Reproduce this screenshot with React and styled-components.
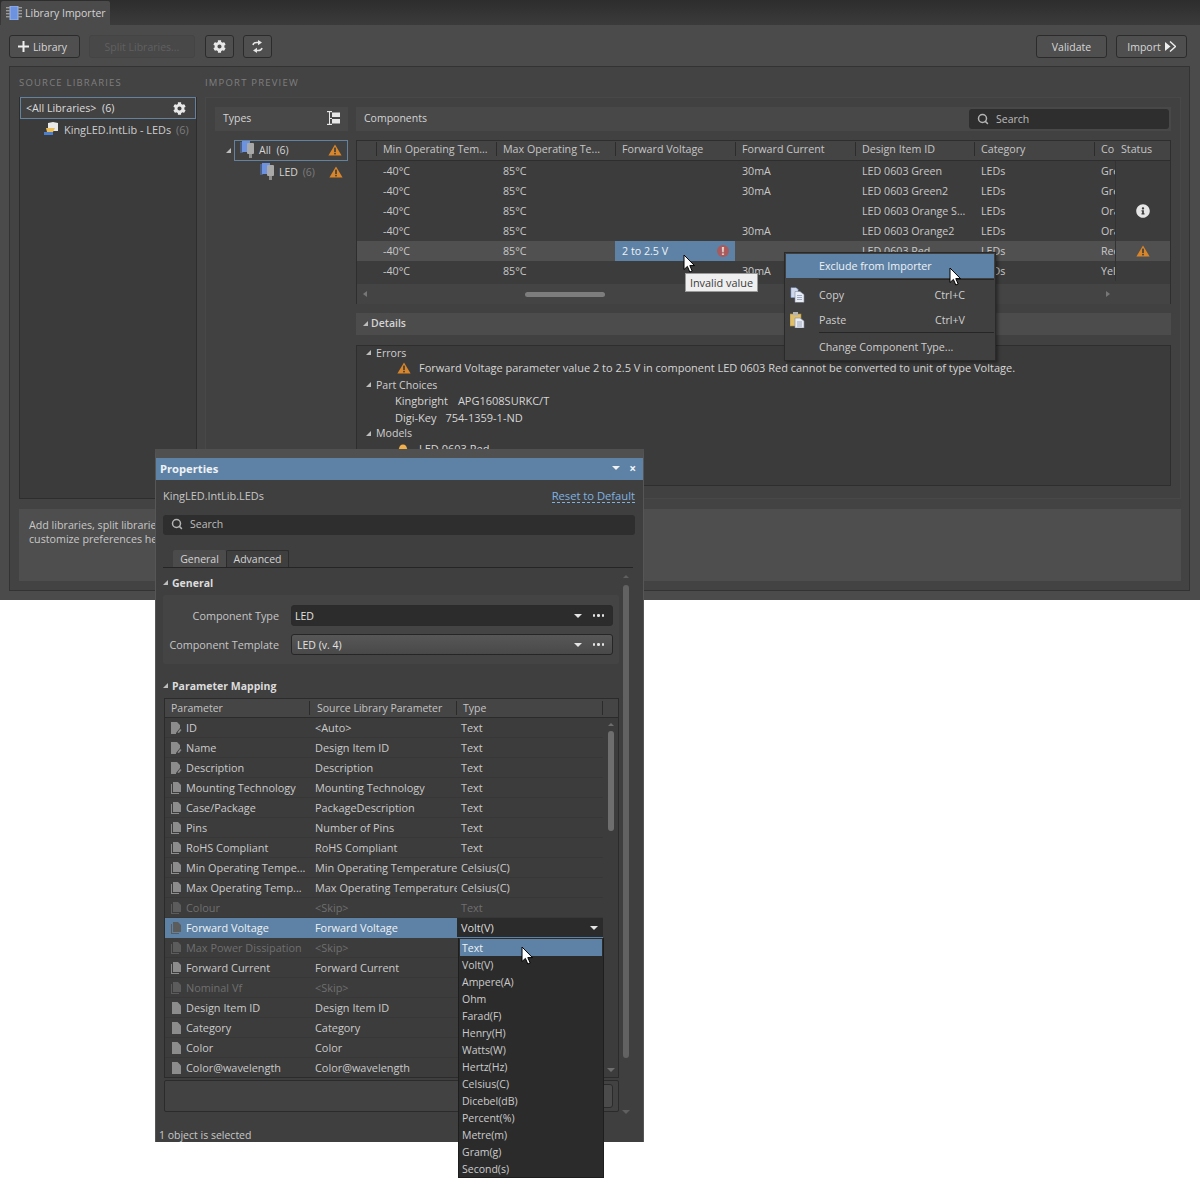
import React from 'react';
import styled, { createGlobalStyle } from 'styled-components';
import { FaCog, FaInfoCircle } from 'react-icons/fa';
import { LuSearch } from 'react-icons/lu';

const Global = createGlobalStyle`
    html, body {
        margin: 0;
        background: #fff;
    }
    * {
        box-sizing: border-box;
    }
    body {
        font-family: "Open Sans", "Liberation Sans", sans-serif;
        font-size: 10.5px;
        color: #cfcfcf;
    }
`;

const Page = styled.div`
    position: relative;
    width: 1200px;
    height: 1178px;
    overflow: hidden;
    background: #fff;
`;

const Window = styled.div`
    height: 600px;
    background: #4b4b4b;
    display: flex;
    flex-direction: column;
`;

const TabBar = styled.div`
    height: 25px;
    padding: 1px 0 0 1px;
    background: linear-gradient(#2d2d2d, #3b3b3b);
    display: flex;
`;

const Tab = styled.div`
    width: 109px;
    height: 24px;
    padding-left: 5px;
    display: flex;
    align-items: center;
    gap: 3px;
    background: #4b4b4b;
    border-radius: 2px 2px 0 0;
    color: #d4d4d4;
`;

const Toolbar = styled.div`
    height: 41px;
    padding: 10px 13px 0 9px;
    display: flex;
    gap: 9px;
    flex-shrink: 0;
`;

const Button = styled.div`
    width: ${(p) => p.$w}px;
    height: 23px;
    padding-right: ${(p) => p.$pr || 0}px;
    display: flex;
    align-items: center;
    justify-content: center;
    gap: 4px;
    border: 1px solid ${(p) => (p.$off ? '#444' : '#2b2b2b')};
    border-radius: 3px;
    background: ${(p) => (p.$off ? '#484848' : '#4f4f4f')};
    color: ${(p) => (p.$off ? '#606060' : '#d6d6d6')};
    margin-left: ${(p) => (p.$push ? 'auto' : `${p.$ml || 0}px`)};
`;

const Frame = styled.div`
    height: 525px;
    margin: 0 10px 0 9px;
    padding: 0 8px 0 9px;
    border: 1px solid #333;
    background: #434343;
`;

const Columns = styled.div`
    height: 432px;
    display: grid;
    grid-template-columns: 178px 976px;
    column-gap: 8px;
`;

const Side = styled.div`
    display: flex;
    flex-direction: column;
`;

const SideLabel = styled.div`
    height: 30px;
    padding-top: 9px;
    font-size: 9.5px;
    letter-spacing: 1.2px;
    color: #7f7f7f;
    line-height: 13px;
`;

const SourceList = styled.div`
    height: 402px;
    background: #3b3b3b;
    border: 1px solid #2d2d2d;
    border-top: 0;
`;

const SourceAll = styled.div`
    height: 22px;
    padding: 0 9px 0 5px;
    display: flex;
    align-items: center;
    justify-content: space-between;
    border: 1px solid #64829e;
    background: #424242;
    color: #dcdcdc;
    font-size: 10.7px;
`;

const SourceChild = styled.div`
    height: 22px;
    padding: 0 0 2px 24px;
    display: flex;
    align-items: center;
    gap: 5px;
    color: #cdcdcd;
    font-size: 10.9px;
`;

const Count = styled.span`
    color: #7c7c7c;
    margin-left: ${(p) => p.$gap || 0}px;
`;

const Preview = styled.div`
    height: 402px;
    padding: 9px 8px 0 9px;
    border: 1px solid #484848;
    background: #414141;
    display: grid;
    grid-template-columns: 133px 815px;
    column-gap: 8px;
`;

const HeadBar = styled.div`
    height: 24px;
    padding: 0 8px 2px;
    display: flex;
    align-items: center;
    justify-content: space-between;
    background: #484848;
    color: #d4d4d4;
`;

const SearchBox = styled.div`
    width: ${(p) => (p.$wide ? '100%' : '200px')};
    height: 20px;
    margin-right: ${(p) => (p.$wide ? 0 : -6)}px;
    margin-bottom: ${(p) => (p.$wide ? 0 : -2)}px;
    padding: 0 0 ${(p) => (p.$wide ? 2 : 1)}px 8px;
    display: flex;
    align-items: center;
    gap: 7px;
    background: #2e2e2e;
    border-radius: 3px;
    color: #bdbdbd;
`;

const Tree = styled.div`
    margin-top: 9px;
    padding-left: 11px;
`;

const TreeRow = styled.div`
    height: ${(p) => (p.$on ? 21 : 23)}px;
    margin-left: ${(p) => (p.$on ? 8 : 34)}px;
    padding: 0 5px ${(p) => (p.$on ? 2 : 2)}px ${(p) => (p.$on ? 5 : 0)}px;
    display: flex;
    align-items: center;
    gap: 4px;
    border: ${(p) => (p.$on ? '1px solid #64829e' : '0')};
    position: relative;
    color: #d4d4d4;
`;

const TreeEnd = styled.span`
    margin-left: auto;
    display: flex;
`;

const Caret = styled.span`
    display: inline-block;
    width: 0;
    height: 0;
    border-left: 5px solid transparent;
    border-bottom: 5px solid #bdbdbd;
    flex-shrink: 0;
`;

const TreeCaret = styled(Caret)`
    position: absolute;
    left: -9px;
    top: 7px;
`;

const Right = styled.div`
    display: flex;
    flex-direction: column;
`;

const Table = styled.div`
    height: 164px;
    margin-top: 9px;
    border: 1px solid #2e2e2e;
    background: #3c3c3c;
    font-size: 10.7px;
`;

const cols = '19px 120px 119px 120px 120px 119px 120px 21px 1fr';

const HeaderRow = styled.div`
    height: 20px;
    padding-bottom: 3px;
    display: grid;
    grid-template-columns: ${cols};
    align-items: center;
    background: #444;
    border-bottom: 1px solid #2e2e2e;
    color: #c6c6c6;
`;

const HeaderCell = styled.div`
    height: 14px;
    line-height: 14px;
    padding-left: 6px;
    border-left: ${(p) => (p.$plain ? '0' : '1px solid #2c2c2c')};
    white-space: nowrap;
    overflow: hidden;
`;

const DataRow = styled.div`
    height: 20px;
    display: grid;
    grid-template-columns: ${cols};
    align-items: center;
    background: ${(p) => (p.$on ? '#505050' : 'transparent')};
    color: #c8c8c8;
`;

const Cell = styled.div`
    height: 100%;
    padding-left: 7px;
    display: flex;
    align-items: center;
    white-space: nowrap;
    overflow: hidden;
    background: ${(p) => (p.$bad ? '#5e82a5' : 'transparent')};
    color: ${(p) => (p.$bad ? '#eef2f6' : 'inherit')};
    justify-content: ${(p) => (p.$bad ? 'space-between' : 'flex-start')};
`;

const StatusCell = styled.div`
    height: 100%;
    display: flex;
    align-items: center;
    justify-content: center;
    border-left: 1px solid #333;
`;

const ErrorDot = styled.span`
    width: 12px;
    height: 12px;
    margin-right: 6px;
    border-radius: 50%;
    background: #a85a5c;
    color: #f2e6e6;
    font-size: 10px;
    font-weight: 700;
    line-height: 12px;
    text-align: center;
`;

const TableScroll = styled.div`
    height: 20px;
    margin-top: 3px;
    padding: 0 6px;
    display: flex;
    align-items: center;
    position: relative;
    background: #444;
`;

const ScrollThumb = styled.div`
    width: 80px;
    height: 5px;
    margin-left: 158px;
    border-radius: 3px;
    background: #7d7d7d;
`;

const ArrowLeft = styled.span`
    width: 0;
    height: 0;
    border: 3px solid transparent;
    border-right: 4px solid #777;
    border-left: 0;
`;

const ArrowRight = styled.span`
    width: 0;
    height: 0;
    margin-left: 501px;
    border: 3px solid transparent;
    border-left: 4px solid #777;
    border-right: 0;
`;

const DetailsBar = styled(HeadBar)`
    height: 22px;
    margin-top: 9px;
    padding-left: 7px;
    justify-content: flex-start;
    gap: 3px;
    background: #4c4c4c;
    font-weight: 600;
`;

const DetailsBox = styled.div`
    height: 141px;
    margin-top: 10px;
    padding: 0 9px;
    border: 1px solid #2e2e2e;
    background: #3b3b3b;
    overflow: hidden;
`;

const DetailHead = styled.div`
    height: ${(p) => p.$h}px;
    display: flex;
    align-items: center;
    gap: 5px;
    color: #cfcfcf;
    font-size: 10.6px;
`;

const DetailLine = styled.div`
    height: ${(p) => p.$h}px;
    padding-left: ${(p) => p.$in}px;
    display: flex;
    align-items: center;
    gap: ${(p) => p.$gap || 0}px;
    white-space: nowrap;
    color: #d6d6d6;
    font-size: 11px;
`;

const Description = styled.div`
    height: 72px;
    margin-top: 10px;
    padding: 10px 10px;
    background: #4e4e4e;
    line-height: 13.5px;
    color: #c8c8c8;
    font-size: 10.7px;
`;

/* floating Properties window */
const Panel = styled.div`
    position: absolute;
    left: 155px;
    top: 449px;
    width: 489px;
    height: 693px;
    background: #3f3f3f;
    border: 1px solid #565656;
    border-top: 9px solid #505050;
    border-bottom: 0;
    display: flex;
    flex-direction: column;
`;

const PanelTitle = styled.div`
    height: 22px;
    padding: 0 5px 2px 4px;
    display: flex;
    align-items: center;
    justify-content: space-between;
    flex-shrink: 0;
    background: #5e82a5;
    color: #eef2f6;
    font-size: 11.2px;
    font-weight: 700;
`;

const TitleTools = styled.div`
    display: flex;
    align-items: center;
    gap: 9px;
    padding-right: 2px;
    font-size: 12px;
`;

const PanelHead = styled.div`
    height: 35px;
    padding: 0 8px 4px 7px;
    display: flex;
    align-items: center;
    justify-content: space-between;
    flex-shrink: 0;
    font-size: 10.9px;
    color: #c6c6c6;
`;

const ResetLink = styled.span`
    color: #7fb2e0;
    border-bottom: 1px dashed #7fb2e0;
    line-height: 13px;
    font-size: 11.2px;
`;

const PanelSearch = styled.div`
    padding: 0 8px 0 7px;
    flex-shrink: 0;
`;

const TabRow = styled.div`
    height: 18px;
    margin: 15px 10px 0 7px;
    padding-left: 10px;
    display: flex;
    flex-shrink: 0;
    border-bottom: 1px solid #252525;
`;

const PanelTab = styled.div`
    height: 17px;
    padding: 0 7px;
    width: ${(p) => p.$w}px;
    display: flex;
    align-items: center;
    justify-content: center;
    background: ${(p) => (p.$on ? '#4b4b4b' : '#3f3f3f')};
    border: 1px solid ${(p) => (p.$on ? '#4b4b4b' : '#2c2c2c')};
    border-bottom: 0;
    border-radius: 2px 2px 0 0;
    color: #d4d4d4;
`;

const PanelBody = styled.div`
    flex: 1;
    padding-left: 7px;
    display: flex;
`;

const PanelMain = styled.div`
    width: 456px;
`;

const SectionHead = styled.div`
    height: ${(p) => p.$h}px;
    padding-top: ${(p) => p.$pt}px;
    display: flex;
    align-items: center;
    gap: 4px;
    color: #dcdcdc;
    font-weight: 700;
`;

const GroupBox = styled.div`
    height: 69px;
    padding: 10px 6px 0 0;
    background: #444;
    border-radius: 2px;
    display: flex;
    flex-direction: column;
    gap: 8px;
`;

const FieldRow = styled.div`
    height: 21px;
    display: flex;
    align-items: center;
    gap: 12px;
`;

const FieldLabel = styled.div`
    width: 116px;
    text-align: right;
    color: #c6c6c6;
    font-size: 10.8px;
`;

const FieldSelect = styled.div`
    flex: 1;
    height: 100%;
    padding: 0 8px 0 ${(p) => (p.$raised ? 5 : 3)}px;
    display: flex;
    align-items: center;
    justify-content: space-between;
    border-radius: 3px;
    border: 1px solid ${(p) => (p.$raised ? '#262626' : '#2b2b2b')};
    background: ${(p) => (p.$raised ? 'linear-gradient(#575757, #494949)' : '#2c2c2c')};
    color: #e2e2e2;
`;

const FieldTools = styled.div`
    display: flex;
    align-items: center;
    gap: 11px;
`;

const DownTri = styled.span`
    width: 0;
    height: 0;
    border-left: 4px solid transparent;
    border-right: 4px solid transparent;
    border-top: 4px solid ${(p) => p.$c || '#e4e4e4'};
`;

const Dots = styled.span`
    display: flex;
    gap: 2px;
    i {
        width: 2.5px;
        height: 2.5px;
        border-radius: 50%;
        background: #e4e4e4;
    }
`;

const MapTable = styled.div`
    height: 380px;
    margin-left: 1px;
    border: 1px solid #2b2b2b;
    background: #3c3c3c;
    font-size: 10.9px;
`;

const MapHeader = styled.div`
    height: 19px;
    padding-right: 15px;
    display: grid;
    grid-template-columns: 145px 147px 146px;
    align-items: center;
    background: #454545;
    border-bottom: 1px solid #2b2b2b;
    color: #c4c4c4;
    font-size: 10.5px;
`;

const MapHeadCell = styled.div`
    padding-left: ${(p) => p.$pad}px;
    height: 14px;
    line-height: 14px;
    border-right: 1px solid #2b2b2b;
`;

const MapBody = styled.div`
    height: 359px;
    display: flex;
    overflow: hidden;
`;

const MapRows = styled.div`
    width: 438px;
    flex-shrink: 0;
`;

const MapRow = styled.div`
    height: 20px;
    display: grid;
    grid-template-columns: 145px 147px 146px;
    align-items: center;
    background: ${(p) => (p.$on ? '#5e82a5' : 'transparent')};
    border-bottom: 1px solid ${(p) => (p.$on ? '#5e82a5' : '#373737')};
    color: ${(p) => (p.$on ? '#eef2f6' : p.$skip ? '#6f6f6f' : '#cbcbcb')};
`;

const MapName = styled.div`
    padding-left: 6px;
    display: flex;
    align-items: center;
    gap: 4px;
    white-space: nowrap;
    overflow: hidden;
`;

const MapCell = styled.div`
    padding-left: ${(p) => p.$pad}px;
    white-space: nowrap;
    overflow: hidden;
`;

const TypeSelect = styled.div`
    height: 19px;
    padding: 0 5px 0 4px;
    display: flex;
    align-items: center;
    justify-content: space-between;
    background: #2b2b2b;
    color: #dedede;
`;

const MapScroll = styled.div`
    flex: 1;
    padding-top: 5px;
    display: flex;
    flex-direction: column;
    align-items: center;
`;

const UpTri = styled.span`
    width: 0;
    height: 0;
    border-left: 3px solid transparent;
    border-right: 3px solid transparent;
    border-bottom: 3px solid ${(p) => p.$c || '#6e6e6e'};
`;

const MapThumb = styled.div`
    width: 6px;
    height: 100px;
    margin-top: 5px;
    border-radius: 3px;
    background: #6e6e6e;
`;

const MapDown = styled.div`
    margin-top: auto;
    margin-bottom: 5px;
    display: flex;
`;

const Under = styled.div`
    height: 32px;
    margin: 2px 0 0 1px;
    padding: 3px 5px 3px 0;
    display: flex;
    justify-content: flex-end;
    border: 1px solid #2b2b2b;
    background: #424242;
    border-radius: 2px;
`;

const UnderButton = styled.div`
    width: 60px;
    border: 1px solid #2b2b2b;
    border-radius: 3px;
    background: #4b4b4b;
`;

const BodyScroll = styled.div`
    width: 14px;
    height: 546px;
    padding-top: 7px;
    display: flex;
    flex-direction: column;
    align-items: center;
`;

const BodyThumb = styled.div`
    width: 6px;
    height: 473px;
    margin-top: 7px;
    border-radius: 3px;
    background: #626262;
`;

const BodyDown = styled.div`
    margin-top: auto;
    display: flex;
`;

const StatusBar = styled.div`
    height: 20px;
    padding: 6px 0 0 3px;
    flex-shrink: 0;
    color: #c8c8c8;
`;

/* overlays */
const Menu = styled.div`
    position: absolute;
    left: 784px;
    top: 252px;
    width: 212px;
    height: 109px;
    padding: 1px;
    background: #404040;
    border: 1px solid #2a2a2a;
    box-shadow: 2px 2px 3px rgba(0, 0, 0, 0.4);
    font-size: 10.7px;
`;

const MenuItem = styled.div`
    height: ${(p) => p.$h}px;
    padding: 0 29px 0 33px;
    display: flex;
    align-items: center;
    justify-content: space-between;
    position: relative;
    background: ${(p) => (p.$on ? '#5e82a5' : 'transparent')};
    color: ${(p) => (p.$on ? '#eef2f6' : '#cfcfcf')};
`;

const MenuIcon = styled.span`
    position: absolute;
    left: 4px;
    top: 50%;
    transform: translateY(-50%);
    display: flex;
`;

const MenuLine = styled.div`
    height: 1px;
    margin: ${(p) => p.$mt}px 0 0 33px;
    background: #262626;
`;

const Tooltip = styled.div`
    position: absolute;
    left: 685px;
    top: 273px;
    width: 73px;
    height: 19px;
    padding-bottom: 1px;
    display: flex;
    align-items: center;
    justify-content: center;
    background: #efefef;
    border: 1px solid #9a9a9a;
    color: #3a3a3a;
    font-size: 10.9px;
`;

const Cursor = styled.svg`
    position: absolute;
    left: ${(p) => p.$x}px;
    top: ${(p) => p.$y}px;
`;

const TypeMenu = styled.div`
    position: absolute;
    left: 458px;
    top: 938px;
    width: 146px;
    height: 240px;
    padding: 1px;
    background: #2b2b2b;
    border: 1px solid #1e1e1e;
    border-top: 0;
`;

const TypeItem = styled.div`
    height: 17px;
    padding-left: 2px;
    display: flex;
    align-items: center;
    background: ${(p) => (p.$on ? '#5e82a5' : 'transparent')};
    color: ${(p) => (p.$on ? '#eef2f6' : '#cbcbcb')};
`;

const WarnIcon = () => (
    <svg width="14" height="12" viewBox="0 0 14 12">
        <path d="M7 0.5 L13.6 11.5 H0.4 Z" fill="#d9862a" />
        <rect x="6.2" y="3.6" width="1.6" height="4.4" fill="#3a3a3a" />
        <rect x="6.2" y="8.8" width="1.6" height="1.6" fill="#3a3a3a" />
    </svg>
);

const LedIcon = () => (
    <svg width="15" height="17" viewBox="0 0 15 17">
        <rect x="0" y="1" width="3" height="11" fill="#4b5f86" />
        <rect x="2" y="0" width="8" height="11" fill="#6d93e0" />
        <rect x="7" y="2" width="7" height="11" rx="1" fill="#a9a9a9" />
        <rect x="9" y="13" width="3" height="4" fill="#8c8c8c" />
    </svg>
);

const ChipIcon = () => (
    <svg width="16" height="14" viewBox="0 0 16 14">
        <rect x="4" y="0" width="8" height="14" fill="#6d93e0" stroke="#9db8ee" />
        {[1, 4, 7, 10].map((y) => (
            <g key={y}>
                <rect x="0" y={y} width="4" height="1.4" fill="#9a9a9a" />
                <rect x="12" y={y} width="4" height="1.4" fill="#9a9a9a" />
            </g>
        ))}
    </svg>
);

const LibIcon = () => (
    <svg width="15" height="14" viewBox="0 0 15 14">
        <path d="M4 1 L9 0 L14 1 V9 H4 Z" fill="#e9e9e9" />
        <path d="M2 6 H11 L9 10 H3 Z" fill="#e8bd5a" />
        <rect x="0" y="10" width="9" height="3" fill="#4d7fcf" />
    </svg>
);

const ModelIcon = () => (
    <svg width="14" height="10" viewBox="0 0 14 10">
        <ellipse cx="7" cy="7" rx="7" ry="3" fill="#c7822f" />
        <ellipse cx="7" cy="5" rx="4" ry="4.5" fill="#f2b04a" />
    </svg>
);

const PageIcon = ({ kind, dim }) => {
    const c = dim ? '#5c5c5c' : '#8c8c8c';
    if (kind === 'pen') {
        return (
            <svg width="11" height="12" viewBox="0 0 11 12">
                <path d="M0 0 H6 L9 3 V6 L5 11 V12 H0 Z" fill={c} />
                <path d="M9 7 L10.5 8 L8 11 L6.5 10.6 Z" fill={c} />
            </svg>
        );
    }
    if (kind === 'single') {
        return (
            <svg width="11" height="12" viewBox="0 0 11 12">
                <path d="M1 0 H6.5 L10 3.5 V12 H1 Z" fill={c} />
            </svg>
        );
    }
    return (
        <svg width="11" height="12" viewBox="0 0 11 12">
            <path d="M0 2 H1 V11 H8 V12 H0 Z" fill={c} />
            <path d="M2 0 H7 L10 3 V10 H2 Z" fill={c} />
        </svg>
    );
};

const DocLines = ({ x, y }) => (
    <g stroke="#8a9ab5" strokeWidth="0.8">
        <path d={`M${x} ${y} h5`} />
        <path d={`M${x} ${y + 2} h5`} />
        <path d={`M${x} ${y + 4} h5`} />
    </g>
);

const CopyIcon = () => (
    <svg width="15" height="15" viewBox="0 0 15 15">
        <path d="M1 0 H6 L8 2 V10 H1 Z" fill="#cfd8ea" stroke="#7f9fd6" strokeWidth="0.6" />
        <path d="M5 4 H10 L14 7 V15 H5 Z" fill="#e8ecf4" stroke="#7f8aa0" strokeWidth="0.6" />
        <DocLines x={7} y={8} />
    </svg>
);

const PasteIcon = () => (
    <svg width="15" height="16" viewBox="0 0 15 16">
        <rect x="0" y="2" width="11" height="12" fill="#e0bf6c" stroke="#a88a3e" strokeWidth="0.6" />
        <rect x="3" y="0" width="5" height="3.5" fill="#b5b5b5" />
        <path d="M5 6 H10 L14 9 V16 H5 Z" fill="#e8ecf4" stroke="#7f8aa0" strokeWidth="0.6" />
        <DocLines x={7} y={10} />
    </svg>
);

const SwapIcon = () => (
    <svg width="11" height="13" viewBox="0 0 11 13" fill="none" stroke="#e6e6e6" strokeWidth="1.5">
        <path d="M1 5 C1.5 2.6 3.5 2.2 6.5 2.6" />
        <path d="M6 0 L10 2.6 L6 5.2 Z" fill="#e6e6e6" stroke="none" />
        <path d="M10 8 C9.5 10.4 7.5 10.8 4.5 10.4" />
        <path d="M5 7.8 L1 10.4 L5 13 Z" fill="#e6e6e6" stroke="none" />
    </svg>
);

const TypesIcon = () => (
    <svg width="13" height="14" viewBox="0 0 13 14" fill="#e6e6e6">
        <rect x="2" y="0" width="1" height="14" />
        <rect x="0" y="0" width="5" height="1.2" />
        <rect x="0" y="12.8" width="5" height="1.2" />
        <rect x="5" y="1.5" width="8" height="4.5" />
        <rect x="5" y="8" width="8" height="4.5" />
        <rect x="3" y="7" width="2" height="1" />
    </svg>
);

const ImportIcon = () => (
    <svg width="11" height="11" viewBox="0 0 11 11">
        <path d="M0 1 L5.5 5.5 L0 10 Z" fill="#eee" />
        <path d="M5 0.5 L10.5 5.5 L5 10.5" fill="none" stroke="#eee" strokeWidth="1.4" />
    </svg>
);

const Pointer = ({ x, y }) => (
    <Cursor $x={x} $y={y} width="13" height="19" viewBox="0 0 13 19">
        <path
            d="M1 1 V15.5 L4.4 12.4 L6.8 18 L9.2 17 L6.8 11.6 H11.5 Z"
            fill="#fff"
            stroke="#000"
            strokeWidth="1"
        />
    </Cursor>
);

const components = [
    { current: '30mA', id: 'LED 0603 Green', co: 'Green' },
    { current: '30mA', id: 'LED 0603 Green2', co: 'Green' },
    { id: 'LED 0603 Orange S...', co: 'Orange', status: 'info' },
    { current: '30mA', id: 'LED 0603 Orange2', co: 'Orange' },
    { id: 'LED 0603 Red', co: 'Red', status: 'warn', bad: true },
    { current: '30mA', id: 'LED 0603 Yellow', co: 'Yellow' },
];

const params = [
    ['ID', '<Auto>', 'Text', 'pen'],
    ['Name', 'Design Item ID', 'Text', 'pen'],
    ['Description', 'Description', 'Text', 'pen'],
    ['Mounting Technology', 'Mounting Technology', 'Text'],
    ['Case/Package', 'PackageDescription', 'Text'],
    ['Pins', 'Number of Pins', 'Text'],
    ['RoHS Compliant', 'RoHS Compliant', 'Text'],
    ['Min Operating Tempe...', 'Min Operating Temperature', 'Celsius(C)'],
    ['Max Operating Temp...', 'Max Operating Temperature', 'Celsius(C)'],
    ['Colour', '<Skip>', 'Text'],
    ['Forward Voltage', 'Forward Voltage', 'Volt(V)'],
    ['Max Power Dissipation', '<Skip>', 'Text'],
    ['Forward Current', 'Forward Current', 'Text'],
    ['Nominal Vf', '<Skip>', 'Text'],
    ['Design Item ID', 'Design Item ID', 'Text', 'single'],
    ['Category', 'Category', 'Text', 'single'],
    ['Color', 'Color', 'Text', 'single'],
    ['Color@wavelength', 'Color@wavelength', 'Text', 'single'],
];

const units = [
    'Text', 'Volt(V)', 'Ampere(A)', 'Ohm', 'Farad(F)', 'Henry(H)', 'Watts(W)',
    'Hertz(Hz)', 'Celsius(C)', 'Dicebel(dB)', 'Percent(%)', 'Metre(m)', 'Gram(g)', 'Second(s)',
];

const App = () => (
    <Page>
        <Global />
        <Window>
            <TabBar>
                <Tab>
                    <ChipIcon />
                    Library Importer
                </Tab>
            </TabBar>
            <Toolbar>
                <Button $w={71} $pr={4}>
                    <svg width="11" height="11" viewBox="0 0 11 11" fill="#f0f0f0">
                        <rect x="4.5" width="2" height="11" />
                        <rect y="4.5" width="11" height="2" />
                    </svg>
                    Library
                </Button>
                <Button $w={106} $off>Split Libraries...</Button>
                <Button $w={29} $ml={1}><FaCog size={13} color="#e8e8e8" /></Button>
                <Button $w={29}><SwapIcon /></Button>
                <Button $w={71} $push>Validate</Button>
                <Button $w={71}>Import <ImportIcon /></Button>
            </Toolbar>
            <Frame>
                <Columns>
                    <Side>
                        <SideLabel>SOURCE LIBRARIES</SideLabel>
                        <SourceList>
                            <SourceAll>
                                <span>&lt;All Libraries&gt;&nbsp; (6)</span>
                                <FaCog size={13} color="#e8e8e8" />
                            </SourceAll>
                            <SourceChild>
                                <LibIcon />
                                <span>KingLED.IntLib - LEDs <Count $gap={2}>(6)</Count></span>
                            </SourceChild>
                        </SourceList>
                    </Side>
                    <Side>
                        <SideLabel>IMPORT PREVIEW</SideLabel>
                        <Preview>
                            <div>
                                <HeadBar>
                                    Types
                                    <TypesIcon />
                                </HeadBar>
                                <Tree>
                                    <TreeRow $on>
                                        <TreeCaret />
                                        <LedIcon />
                                        <span>All&nbsp; (6)</span>
                                        <TreeEnd><WarnIcon /></TreeEnd>
                                    </TreeRow>
                                    <TreeRow>
                                        <LedIcon />
                                        <span>LED <Count $gap={2}>(6)</Count></span>
                                        <TreeEnd><WarnIcon /></TreeEnd>
                                    </TreeRow>
                                </Tree>
                            </div>
                            <Right>
                                <HeadBar>
                                    Components
                                    <SearchBox>
                                        <LuSearch size={12} color="#b4b4b4" strokeWidth={3} />
                                        Search
                                    </SearchBox>
                                </HeadBar>
                                <Table>
                                    <HeaderRow>
                                        <span />
                                        <HeaderCell>Min Operating Tem...</HeaderCell>
                                        <HeaderCell>Max Operating Te...</HeaderCell>
                                        <HeaderCell>Forward Voltage</HeaderCell>
                                        <HeaderCell>Forward Current</HeaderCell>
                                        <HeaderCell>Design Item ID</HeaderCell>
                                        <HeaderCell>Category</HeaderCell>
                                        <HeaderCell>Co</HeaderCell>
                                        <HeaderCell $plain>Status</HeaderCell>
                                    </HeaderRow>
                                    {components.map((c) => (
                                        <DataRow key={c.id} $on={c.bad}>
                                            <span />
                                            <Cell>-40°C</Cell>
                                            <Cell>85°C</Cell>
                                            <Cell $bad={c.bad}>
                                                {c.bad && '2 to 2.5 V'}
                                                {c.bad && <ErrorDot>!</ErrorDot>}
                                            </Cell>
                                            <Cell>{c.current}</Cell>
                                            <Cell>{c.id}</Cell>
                                            <Cell>LEDs</Cell>
                                            <Cell>{c.co}</Cell>
                                            <StatusCell>
                                                {c.status === 'info' && <FaInfoCircle size={14} color="#e6e6e6" />}
                                                {c.status === 'warn' && <WarnIcon />}
                                            </StatusCell>
                                        </DataRow>
                                    ))}
                                    <TableScroll>
                                        <ArrowLeft />
                                        <ScrollThumb />
                                        <ArrowRight />
                                    </TableScroll>
                                </Table>
                                <DetailsBar><Caret />Details</DetailsBar>
                                <DetailsBox>
                                    <DetailHead $h={13}><Caret />Errors</DetailHead>
                                    <DetailLine $h={17} $in={31} $gap={8}>
                                        <WarnIcon />
                                        Forward Voltage parameter value 2 to 2.5 V in component LED 0603 Red cannot be converted to unit of type Voltage.
                                    </DetailLine>
                                    <DetailHead $h={17}><Caret />Part Choices</DetailHead>
                                    <DetailLine $h={15} $in={29} $gap={10}><span>Kingbright</span><span>APG1608SURKC/T</span></DetailLine>
                                    <DetailLine $h={18} $in={29} $gap={9}><span>Digi-Key</span><span>754-1359-1-ND</span></DetailLine>
                                    <DetailHead $h={14}><Caret />Models</DetailHead>
                                    <DetailLine $h={17} $in={30} $gap={9}><ModelIcon />LED 0603 Red</DetailLine>
                                </DetailsBox>
                            </Right>
                        </Preview>
                    </Side>
                </Columns>
                <Description>
                    Add libraries, split libraries, set up and validate components, then import them. You can<br />
                    customize preferences here.
                </Description>
            </Frame>
        </Window>

        <Panel>
            <PanelTitle>
                Properties
                <TitleTools>
                    <DownTri $c="#f0f0f0" />
                    <span>×</span>
                </TitleTools>
            </PanelTitle>
            <PanelHead>
                KingLED.IntLib.LEDs
                <ResetLink>Reset to Default</ResetLink>
            </PanelHead>
            <PanelSearch>
                <SearchBox $wide>
                    <LuSearch size={12} color="#b4b4b4" strokeWidth={3} />
                    Search
                </SearchBox>
            </PanelSearch>
            <TabRow>
                <PanelTab $on $w={53}>General</PanelTab>
                <PanelTab $w={63}>Advanced</PanelTab>
            </TabRow>
            <PanelBody>
                <PanelMain>
                    <SectionHead $h={27} $pt={2}><Caret />General</SectionHead>
                    <GroupBox>
                        <FieldRow>
                            <FieldLabel>Component Type</FieldLabel>
                            <FieldSelect>
                                LED
                                <FieldTools>
                                    <DownTri />
                                    <Dots><i /><i /><i /></Dots>
                                </FieldTools>
                            </FieldSelect>
                        </FieldRow>
                        <FieldRow>
                            <FieldLabel>Component Template</FieldLabel>
                            <FieldSelect $raised>
                                LED (v. 4)
                                <FieldTools>
                                    <DownTri />
                                    <Dots><i /><i /><i /></Dots>
                                </FieldTools>
                            </FieldSelect>
                        </FieldRow>
                    </GroupBox>
                    <SectionHead $h={34} $pt={9}>
                        <Caret />Parameter Mapping
                    </SectionHead>
                    <MapTable>
                        <MapHeader>
                            <MapHeadCell $pad={6}>Parameter</MapHeadCell>
                            <MapHeadCell $pad={7}>Source Library Parameter</MapHeadCell>
                            <MapHeadCell $pad={6}>Type</MapHeadCell>
                        </MapHeader>
                        <MapBody>
                            <MapRows>
                                {params.map(([name, source, type, kind]) => {
                                    const skip = source === '<Skip>';
                                    const on = name === 'Forward Voltage';
                                    return (
                                        <MapRow key={name} $on={on} $skip={skip}>
                                            <MapName>
                                                <PageIcon kind={kind} dim={skip || on} />
                                                {name}
                                            </MapName>
                                            <MapCell $pad={5}>{source}</MapCell>
                                            {on ? (
                                                <TypeSelect>{type}<DownTri /></TypeSelect>
                                            ) : (
                                                <MapCell $pad={4}>{type}</MapCell>
                                            )}
                                        </MapRow>
                                    );
                                })}
                            </MapRows>
                            <MapScroll>
                                <UpTri />
                                <MapThumb />
                                <MapDown><DownTri $c="#6e6e6e" /></MapDown>
                            </MapScroll>
                        </MapBody>
                    </MapTable>
                    <Under><UnderButton /></Under>
                </PanelMain>
                <BodyScroll>
                    <UpTri $c="#5f5f5f" />
                    <BodyThumb />
                    <BodyDown><DownTri $c="#5f5f5f" /></BodyDown>
                </BodyScroll>
            </PanelBody>
            <StatusBar>1 object is selected</StatusBar>
        </Panel>

        <Tooltip>Invalid value</Tooltip>
        <Menu>
            <MenuItem $on $h={24}>Exclude from Importer</MenuItem>
            <MenuLine $mt={1} />
            <MenuItem $h={29}>
                <MenuIcon><CopyIcon /></MenuIcon>
                Copy<span>Ctrl+C</span>
            </MenuItem>
            <MenuItem $h={21}>
                <MenuIcon><PasteIcon /></MenuIcon>
                Paste<span>Ctrl+V</span>
            </MenuItem>
            <MenuLine $mt={2} />
            <MenuItem $h={28}>Change Component Type...</MenuItem>
        </Menu>
        <TypeMenu>
            {units.map((u, i) => (
                <TypeItem key={u} $on={i === 0}>{u}</TypeItem>
            ))}
        </TypeMenu>
        <Pointer x={683} y={254} />
        <Pointer x={949} y={267} />
        <Pointer x={521} y={946} />
    </Page>
);

export default App;
